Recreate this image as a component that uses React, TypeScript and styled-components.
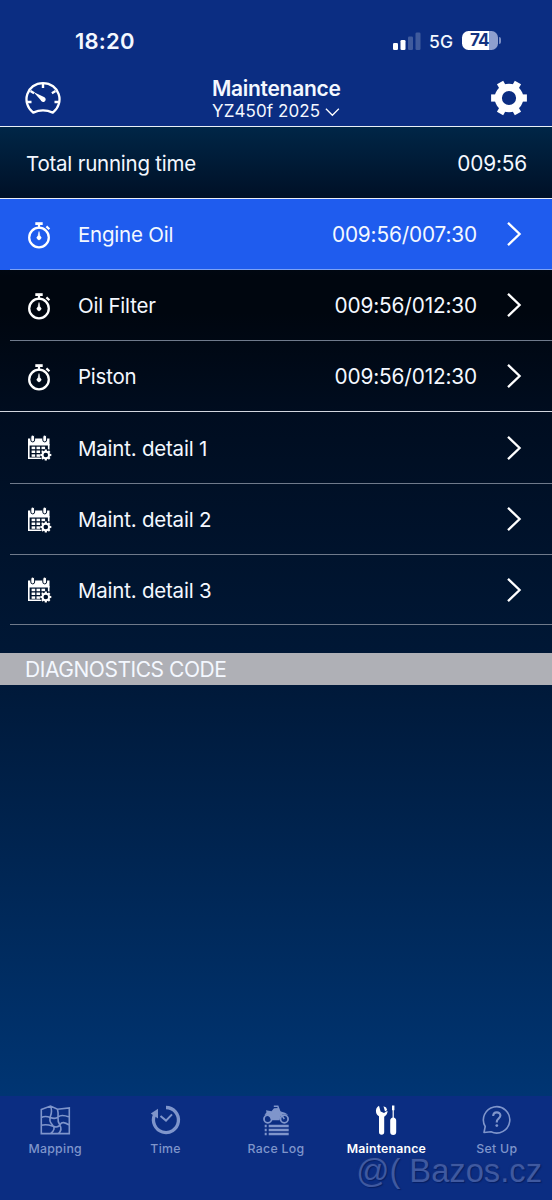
import React from 'react';
import styled, { createGlobalStyle } from 'styled-components';

const Global = createGlobalStyle`
  * { box-sizing: border-box; }
  body { margin: 0; background: #0b2d82; font-family: Inter, "Liberation Sans", sans-serif; color: #f4f8ff; }
`;

const Screen = styled.main`
  width: 552px;
  height: 1200px;
  display: flex;
  flex-direction: column;
  position: relative;
  overflow: hidden;
`;

const Header = styled.header`
  height: 127px;
  flex: none;
  background: #0b2d82;
  border-bottom: 1px solid #e9f0f6;
`;

const StatusBar = styled.div`
  height: 72px;
  padding: 9px 51px 0 75px;
  display: flex;
  align-items: center;
  justify-content: space-between;
`;

const Clock = styled.span`
  font-size: 22px;
  font-weight: 600;
  letter-spacing: 0.2px;
`;

const StatusIcons = styled.div`
  display: flex;
  align-items: center;
`;

const Network = styled.span`
  font-size: 17.5px;
  font-weight: 500;
  letter-spacing: 0;
  margin: 1px 9px 0 8px;
`;

const Battery = styled.span`
  width: 36px;
  height: 19px;
  border-radius: 6.5px;
  background: linear-gradient(90deg, #fff 0 27px, #8f9fce 27px);
  color: #12327f;
  font-size: 17px;
  font-weight: 700;
  line-height: 19px;
  padding-left: 8px;
  letter-spacing: -0.9px;
`;

const BatteryTip = styled.span`
  width: 2px;
  height: 7px;
  margin-left: 1px;
  border-radius: 0 3px 3px 0;
  background: #7c8fc4;
`;

const NavBar = styled.div`
  height: 54px;
  padding: 0 25px;
  display: flex;
  justify-content: space-between;
`;

const NavIcon = styled.svg<{ $top: number }>`
  width: 36px;
  height: 36px;
  margin-top: ${p => p.$top}px;
  flex: none;
`;

const TitleBlock = styled.div`
  width: 128px;
  padding-top: 4px;
`;

const Title = styled.h1`
  margin: 0;
  font-size: 21px;
  line-height: 26px;
  font-weight: 600;
  letter-spacing: -0.3px;
  white-space: nowrap;
`;

const Vehicle = styled.div`
  display: flex;
  align-items: center;
  gap: 5px;
  font-size: 17px;
  line-height: 19px;
  letter-spacing: 0.1px;
  white-space: nowrap;
`;

const Content = styled.section`
  height: 969px;
  flex: none;
  background: linear-gradient(180deg, #002647 0, #001026 71px, #00060f 150px, #00060f 185px, #000d20 290px, #001837 540px, #003573 969px);
`;

const Total = styled.div`
  height: 72px;
  padding: 1px 25px 0 26px;
  display: flex;
  align-items: center;
  justify-content: space-between;
  border-bottom: 1px solid #e8edf7;
`;

const Row = styled.div<{ $active?: boolean; $full?: boolean; $height?: number }>`
  height: ${p => p.$height ?? 71}px;
  display: flex;
  align-items: center;
  padding: 0 30px 0 27px;
  background-color: ${p => (p.$active ? '#1f5cee' : 'transparent')};
  background-image: linear-gradient(${p => (p.$full ? '#d2d6df, #d2d6df' : p.$active ? '#7da2f5, #7da2f5' : '#6f7a8b, #6f7a8b')});
  background-repeat: no-repeat;
  background-position: ${p => (p.$full ? '0' : '10px')} 100%;
  background-size: 100% 1px;
`;

const RowIcon = styled.svg`
  width: 25px;
  height: 28px;
  flex: none;
`;

const Label = styled.span`
  font-size: 20.5px;
  letter-spacing: -0.22px;
  white-space: nowrap;
`;

const RowLabel = styled(Label)`
  flex: 1;
  margin-left: 26px;
`;

const Duration = styled(Label)`
  font-size: 20.8px;
  letter-spacing: -0.15px;
`;

const Chevron = styled.svg`
  width: 16px;
  height: 26px;
  margin-left: 29px;
  margin-bottom: 1px;
  flex: none;
`;

const Diagnostics = styled.h2`
  height: 32px;
  margin: 28px 0 0;
  padding-left: 25px;
  background: #afb0b6;
  font-size: 21px;
  font-weight: 400;
  line-height: 33px;
  letter-spacing: -0.45px;
`;

const TabBar = styled.nav`
  height: 104px;
  flex: none;
  display: grid;
  grid-template-columns: repeat(5, 1fr);
  background: #0b2d82;
`;

const Tab = styled.div<{ $active?: boolean }>`
  display: flex;
  flex-direction: column;
  align-items: center;
  padding-top: 8px;
  color: ${p => (p.$active ? '#fff' : '#7f95cb')};
  font-size: 12.3px;
  line-height: 16px;
  font-weight: ${p => (p.$active ? 600 : 500)};
  letter-spacing: ${p => (p.$active ? 0.2 : 0.3)}px;
`;

const TabIcon = styled.svg`
  width: 32px;
  height: 32px;
  margin-bottom: 5px;
`;

const Watermark = styled.div`
  position: absolute;
  right: 10px;
  bottom: 11px;
  font: 32.7px/36px "Liberation Sans", Arial, sans-serif;
  color: #3f59a0;
  text-shadow: 1px 1px 1px #061f63, -1px -1px 1px #122f7c;
  white-space: nowrap;
`;

const Stopwatch = () => (
  <RowIcon viewBox="0 0 25 28" fill="none" stroke="#fff">
    <circle cx="12" cy="16.5" r="9.8" strokeWidth="2.3" />
    <path d="M8.3 2.6h7.4" strokeWidth="2.8" />
    <path d="M12 3.5v4M19.4 5.4l3 2.9" strokeWidth="2.2" />
    <path d="M12 10.5c.5 2 .8 3.4.9 4.5a2 2 0 1 1-1.8 0c.1-1.1.4-2.5.9-4.5z" fill="#fff" strokeWidth=".5" />
  </RowIcon>
);

const teeth = [0, 45, 90, 135, 180, 225, 270, 315];

const CalendarGear = ({ bg }: { bg: string }) => (
  <RowIcon viewBox="0 0 25 28" fill="#fff">
    <path d="M1 4.5h21.5v7H1z" />
    <path d="M1.8 10v14.2H15M21.7 10v5.5" fill="none" stroke="#fff" strokeWidth="1.6" />
    {[5.7, 17.7].map(x => <rect key={x} x={x - 1.9} y="1.1" width="3.8" height="6.8" rx="1.9" stroke={bg} strokeWidth="1" />)}
    {[13.2, 17, 20.8].map(y => [5, 9.9, 14.9].map(x => (
      <rect key={`${x}-${y}`} x={x - 0.4} y={y - 0.5} width="3.6" height="2.5" />
    )))}
    <circle cx="18.8" cy="21" r="6" fill={bg} />
    {teeth.map(a => <rect key={a} x="17.7" y="15.5" width="2.2" height="3" transform={`rotate(${a} 18.8 21)`} />)}
    <circle cx="18.8" cy="21" r="3.3" fill={bg} stroke="#fff" strokeWidth="2" />
  </RowIcon>
);

const Arrow = () => (
  <Chevron viewBox="0 0 16 26" fill="none" stroke="#fff" strokeWidth="2.3">
    <path d="M2 1.8 13.6 13 2 24.2" />
  </Chevron>
);

const Gauge = () => (
  <NavIcon $top={8} viewBox="0 0 36 36" fill="none" stroke="#fff">
    <path d="M8.2 32.6C-4.5 22.500 2 3.100 18 3.100S40.500 22.500 27.800 32.600q-9.800-4.400-19.600 0z" strokeWidth="2.3" strokeLinejoin="round" />
    <path d="M18 3.500V8M2 22h4.500M34 22h-4.500M5.500 11l3.600 2.200M30.500 11l-3.600 2.200" strokeWidth="2.4" />
    <path d="M8.500 12 19.500 17.200a2.600 2.600 0 1 1-3.900 2.900z" fill="#fff" stroke="none" />
  </NavIcon>
);

const Gear = () => (
  <NavIcon $top={8} viewBox="0 0 36 36">
    {[0, 60, 120, 180, 240, 300].map(a => (
      <rect key={a} x="29" y="14.400" width="6.900" height="7.200" fill="#fff" transform={`rotate(${a} 18 18)`} />
    ))}
    <circle cx="18" cy="18" r="10.700" fill="none" stroke="#fff" strokeWidth="7.200" />
  </NavIcon>
);

const MapIcon = () => (
  <TabIcon viewBox="0 0 32 32" fill="none" stroke="currentColor" strokeWidth="1.6">
    <path d="M2.3 5.500 11.500 2l7 3.300L30.300 4v25.600H2.300zM11.500 2q2 5 0 10t2 9-2 8.600M18.500 5.300q1 4 .5 8t2 8-1.500 8.300M2.300 13.500q4-2 9 0t8-.7 11 .2M2.300 21.300q5-1.500 11 .8t8-1.700 9 .8" />
  </TabIcon>
);

const TimeIcon = () => (
  <TabIcon viewBox="0 0 32 32" fill="none" stroke="currentColor">
    <path d="M16 3.500A12.500 12.500 0 1 1 4.600 10.800" strokeWidth="3.300" />
    <path d="M8 4.800V14.500L.8 9.600z" fill="currentColor" stroke="none" />
    <path d="m10.500 12 5.500 4.600 6-6.200" strokeWidth="2" />
  </TabIcon>
);

const RaceIcon = () => (
  <TabIcon viewBox="0 0 32 32" fill="none" stroke="currentColor">
    <circle cx="7.800" cy="15" r="3.800" strokeWidth="1.800" />
    <circle cx="24.300" cy="15" r="3.800" strokeWidth="1.800" />
    <path d="M6 6.200 11.500 7.200 14 4.200l4.500-.2L20 7.200l5 1.500 3.200 2-5.700-.4-2 2-1 4h-8l-2-3.300-3-2.300-2 .2 2-2.700z" fill="currentColor" stroke="none" />
    <path d="m20.500 9.500-2.700-7.200h-4M20 8.500l4.300 6.500" strokeWidth="1.500" />
    <path d="M4.700 22h2M4.700 26h2M4.700 30h2M8.700 22h20M8.700 26h20M8.700 30h20" strokeWidth="2.300" />
  </TabIcon>
);

const ToolsIcon = () => (
  <TabIcon viewBox="-1 0 32 32" fill="currentColor">
    <path d="M8 1.800C5.500 3.200 4.500 5.800 5.100 8.500c.4 1.700 1.400 2.900 2.900 3.800V28.100a2.600 2.600 0 0 0 5.200 0V12.700c2.200-1.200 3.500-3.400 3.300-5.900l-3.500 2.300-3.400-1.600z" />
    <path d="m12.500 2.200 2.600 1.300 1.100 2.600-2.200 1.500z" />
    <path d="M21 1.600h2.400v4.600h-.6v7.300c1.600.5 2.400 1.600 2.400 3v11.500a2.700 2.700 0 0 1-6 0V16.500c0-1.400.8-2.500 2.400-3V6.200H21z" />
  </TabIcon>
);

const SetupIcon = () => (
  <TabIcon viewBox="1 0 32 32" fill="none" stroke="currentColor" strokeWidth="1.6">
    <path d="M4 28.500 5.200 22.500A13.200 13.200 0 1 1 11 27.800z" strokeLinejoin="round" />
    <path d="M13.200 12c0-4.800 7.200-4.800 7.200-.5 0 2.800-3.600 3.100-3.600 6.200v.8" strokeWidth="2.1" />
    <circle cx="16.800" cy="21.600" r="1.400" fill="currentColor" stroke="none" />
  </TabIcon>
);

const timers = [
  { name: 'Engine Oil', time: '009:56/007:30' },
  { name: 'Oil Filter', time: '009:56/012:30' },
  { name: 'Piston', time: '009:56/012:30' },
];

const details = [
  { name: 'Maint. detail 1', height: 72 },
  { name: 'Maint. detail 2', height: 71 },
  { name: 'Maint. detail 3', height: 70 },
];

const tabs = [
  { name: 'Mapping', Icon: MapIcon },
  { name: 'Time', Icon: TimeIcon },
  { name: 'Race Log', Icon: RaceIcon },
  { name: 'Maintenance', Icon: ToolsIcon },
  { name: 'Set Up', Icon: SetupIcon },
];

export default function App() {
  return (
    <Screen>
      <Global />
      <Header>
        <StatusBar>
          <Clock>18:20</Clock>
          <StatusIcons>
            <svg width="28" height="18" viewBox="0 0 28 18" fill="#fff">
              <rect y="11" width="5" height="7" rx="1.3" />
              <rect x="7.5" y="8" width="5" height="10" rx="1.3" />
              <rect x="15" y="4.5" width="5" height="13.5" rx="1.3" opacity=".22" />
              <rect x="22.5" y=".5" width="5" height="17.5" rx="1.3" opacity=".22" />
            </svg>
            <Network>5G</Network>
            <Battery>74</Battery>
            <BatteryTip />
          </StatusIcons>
        </StatusBar>
        <NavBar>
          <Gauge />
          <TitleBlock>
            <Title>Maintenance</Title>
            <Vehicle>
              YZ450f 2025
              <svg width="16" height="10" viewBox="0 0 16 10" fill="none" stroke="#fff" strokeWidth="1.4"><path d="m1 1.5 7 7 7-7" /></svg>
            </Vehicle>
          </TitleBlock>
          <Gear />
        </NavBar>
      </Header>
      <Content>
        <Total>
          <Label>Total running time</Label>
          <Duration>009:56</Duration>
        </Total>
        {timers.map((t, i) => (
          <Row key={t.name} $active={i === 0} $full={i === 2}>
            <Stopwatch />
            <RowLabel>{t.name}</RowLabel>
            <Duration>{t.time}</Duration>
            <Arrow />
          </Row>
        ))}
        {details.map(d => (
          <Row key={d.name} $height={d.height}>
            <CalendarGear bg="#001128" />
            <RowLabel>{d.name}</RowLabel>
            <Arrow />
          </Row>
        ))}
        <Diagnostics>DIAGNOSTICS CODE</Diagnostics>
      </Content>
      <TabBar>
        {tabs.map(({ name, Icon }) => (
          <Tab key={name} $active={name === 'Maintenance'}>
            <Icon />
            {name}
          </Tab>
        ))}
      </TabBar>
      <Watermark>@( Bazos.cz</Watermark>
    </Screen>
  );
}
